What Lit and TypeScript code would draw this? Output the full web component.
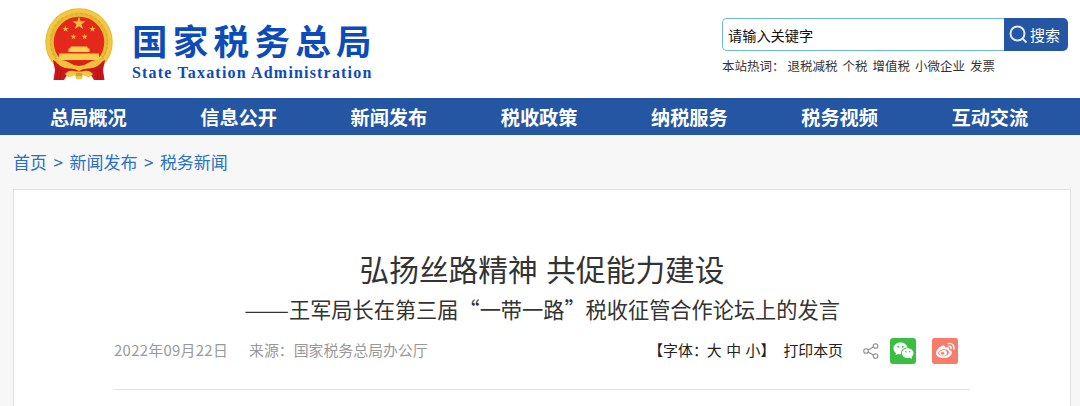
import { LitElement, html, css, svg } from 'lit';
import { customElement } from 'lit/decorators.js';

const NAV_ITEMS = ['总局概况', '信息公开', '新闻发布', '税收政策', '纳税服务', '税务视频', '互动交流'];
const HOT_WORDS = ['退税减税', '个税', '增值税', '小微企业', '发票'];
const CRUMBS = ['首页', '新闻发布', '税务新闻'];
const FONT_SIZES = ['大', '中', '小'];

const STAR = 'M0 -1 L.2245 -.309 L.951 -.309 L.363 .118 L.588 .809 L0 .382 L-.588 .809 L-.363 .118 L-.951 -.309 L-.2245 -.309 Z';

// cx, cy, radius
const STARS = [
  [34, 15.5, 7],
  [20.5, 21, 3.4],
  [47.5, 21, 3.4],
  [28.5, 28.7, 3.2],
  [39.7, 28.7, 3.2],
];

@customElement('tax-emblem')
export class TaxEmblem extends LitElement {
  static styles = css`
    :host {
      display: block;
    }

    svg {
      display: block;
    }
  `;

  render() {
    return html`
      <svg width="68" height="73" viewBox="0 0 68 73">
        <circle cx="34" cy="34" r="29.500" fill="#e4281c" stroke="#e9b935" stroke-width="8.500" />
        <circle cx="34" cy="34" r="31" fill="none" stroke="#f0c843" stroke-width="3.500" />
        <circle cx="34" cy="34" r="28.500" fill="none" stroke="#e0ad30" stroke-width="1.500" stroke-dasharray="3 2" />
        ${STARS.map(
          ([x, y, r]) => svg`<path d=${STAR} transform="translate(${x} ${y}) scale(${r})" fill="#f4bf36" />`
        )}
        <path d="M26 38.500 H42 L43 40.500 H44.500 V44 H23.500 V40.500 H25 Z" fill="#f8d450" />
        <path d="M14 45.500 H54 V49 H57 L54 52 H14 L11 49 H14 Z" fill="#f6d04c" />
        <path d="M13 53 H55 L50 66 H18 Z" fill="#d8201a" />
        <path d="M8 52 L18 57 L27 62 L22 67 L19 72 H8.500 L10 62 Z" fill="#cd161b" />
        <path d="M60 52 L50 57 L41 62 L46 67 L49 72 H59.500 L58 62 Z" fill="#cd161b" />
        <path d="M13 60 L12 72 M16 62 L15 72 M55 60 L56 72 M52 62 L53 72" fill="none" stroke="#a90f16" stroke-width=".8" />
        <path d="M9 51 Q18 51 24 54.500 Q29 58 34 58 Q39 58 44 54.500 Q50 51 59 51 Q54 60 44 60.500 Q38 60 34 63 Q30 60 24 60.500 Q14 60 9 51 Z" fill="#f0c23c" />
        <path d="M20 66 Q24 61 31 63.500 H37 Q44 61 48 66 L44 69.500 L38 67 L37 71 H31 L30 67 L24 69.500 Z" fill="#f3c642" />
        <path d="M31 65 H37 V68 H31 Z" fill="#dc9d27" />
      </svg>
    `;
  }
}

@customElement('site-header')
export class SiteHeader extends LitElement {
  static styles = css`
    :host {
      display: flex;
      justify-content: space-between;
      box-sizing: border-box;
      height: 98px;
      padding: 8px 12px 0 45px;
      background: #fff;
    }

    .brand {
      display: flex;
      gap: 19px;
    }

    .brand-text {
      padding-top: 8px;
      color: #0b4cb8;
      white-space: nowrap;
    }

    .brand-name {
      font-size: 35.500px;
      font-weight: 700;
      line-height: 48px;
      letter-spacing: 5.300px;
    }

    .brand-sub {
      font-family: 'Liberation Serif', serif;
      font-size: 16px;
      font-weight: 700;
      line-height: 18px;
      letter-spacing: 1.180px;
    }

    .search {
      width: 346px;
      padding-top: 10px;
    }

    .search-box {
      display: flex;
      height: 33px;
    }

    .field {
      flex: 1;
      box-sizing: border-box;
      padding-left: 5px;
      border: 1px solid #6db6ec;
      border-right: none;
      border-radius: 5px 0 0 5px;
      color: #111;
      font-size: 14.200px;
      line-height: 32px;
    }

    .submit {
      display: flex;
      align-items: center;
      gap: 2px;
      box-sizing: border-box;
      width: 64px;
      padding-left: 5px;
      border-radius: 0 5px 5px 0;
      background: #2456a3;
      color: #fff;
      font-size: 15px;
      white-space: nowrap;
    }

    .hot {
      display: flex;
      margin-top: 5px;
      color: #333;
      font-size: 12.500px;
      line-height: 20px;
      white-space: nowrap;
    }

    .hot-words {
      display: flex;
      gap: 5px;
      margin-left: 3px;
    }
  `;

  render() {
    return html`
      <div class="brand">
        <tax-emblem></tax-emblem>
        <div class="brand-text">
          <div class="brand-name">国家税务总局</div>
          <div class="brand-sub">State Taxation Administration</div>
        </div>
      </div>
      <div class="search">
        <div class="search-box">
          <div class="field">请输入关键字</div>
          <div class="submit">
            <svg width="19" height="19" viewBox="0 0 19 19" fill="none" stroke="#dfe9f8" stroke-width="2">
              <circle cx="8.500" cy="8.500" r="7" />
              <path d="M13.500 13.500 L17.500 17.500" />
            </svg>
            <span>搜索</span>
          </div>
        </div>
        <div class="hot">
          <span>本站热词：</span>
          <div class="hot-words">${HOT_WORDS.map((word) => html`<span>${word}</span>`)}</div>
        </div>
      </div>
    `;
  }
}

@customElement('share-icons')
export class ShareIcons extends LitElement {
  static styles = css`
    :host {
      display: flex;
      align-items: center;
    }

    .share {
      margin-right: 11px;
    }

    .wechat {
      margin-right: 16px;
    }
  `;

  render() {
    return html`
      <svg class="share" width="16" height="16" viewBox="0 0 16 16" fill="none" stroke="#8f8f8f" stroke-width="1.100">
        <circle cx="3" cy="8" r="2.300" />
        <circle cx="12.500" cy="3" r="2.300" />
        <circle cx="12.500" cy="13" r="2.300" />
        <path d="M5.100 6.900 L10.400 4.100 M5.100 9.100 L10.400 11.900" />
      </svg>
      <svg class="wechat" width="26" height="26" viewBox="0 0 26 26">
        <rect width="26" height="26" rx="3" fill="#3bbf42" />
        <path d="M10.500 4.500 C6.500 4.500 3.500 7.100 3.500 10.400 C3.500 12.300 4.500 13.900 6.100 15 L5.400 17.200 L8 15.900 C9.100 16.200 10 16.300 11.200 16.200 C10.500 12.500 13.600 9.400 17.500 9.500 C16.900 6.600 14 4.500 10.500 4.500 Z" fill="#fff" />
        <path d="M17.700 10.300 C14.500 10.300 12 12.500 12 15.200 C12 18 14.500 20.100 17.700 20.100 C18.500 20.100 19.200 20 19.900 19.800 L22 21 L21.500 19 C22.700 18.100 23.500 16.800 23.500 15.200 C23.500 12.500 20.900 10.300 17.700 10.300 Z" fill="#fff" />
        <g fill="#3bbf42">
          <circle cx="8.200" cy="8.700" r=".95" />
          <circle cx="12.800" cy="8.700" r=".95" />
          <circle cx="15.900" cy="13.700" r=".8" />
          <circle cx="19.600" cy="13.700" r=".8" />
        </g>
      </svg>
      <svg width="26" height="26" viewBox="0 0 26 26">
        <rect width="26" height="26" rx="2.500" fill="#f97b6b" />
        <path d="M10.800 7.600 C12.600 7 13.300 8.100 12.900 9.800 C15.800 8.800 17.800 9.400 17.100 11.700 C19 12.300 20 13.300 19.900 14.700 C19.700 17.600 16.200 20 11.800 20 C7.400 20 4 18.200 4 15.200 C4 12.300 7.500 8.700 10.800 7.600 Z" fill="#fff" />
        <ellipse cx="11.600" cy="14.800" rx="5.400" ry="3.500" fill="#f97b6b" transform="rotate(-8 11.600 14.800)" />
        <ellipse cx="11.200" cy="15" rx="3.900" ry="2.900" fill="#fff" transform="rotate(-12 11.200 15)" />
        <circle cx="10.600" cy="15.300" r="1.500" fill="#f97b6b" />
        <path d="M16.300 5.600 C20 4.700 22.700 7.600 21.700 11.200 M17 8.300 C18.500 8 19.500 9.100 19.100 10.600" fill="none" stroke="#fff" stroke-width="1.400" stroke-linecap="round" />
      </svg>
    `;
  }
}

@customElement('app-root')
export class AppRoot extends LitElement {
  static styles = css`
    :host {
      display: flex;
      flex-direction: column;
      height: 406px;
      overflow: hidden;
      background: #f7f7f7;
      font-family: 'Noto Sans CJK SC', sans-serif;
    }

    .nav {
      display: flex;
      gap: 73.500px;
      flex: none;
      height: 37px;
      padding-left: 50px;
      background: #2456a3;
      color: #fff;
      font-size: 19.200px;
      font-weight: 700;
      line-height: 38px;
      white-space: nowrap;
    }

    .crumbs {
      display: flex;
      gap: 6.500px;
      flex: none;
      height: 54px;
      padding-left: 13px;
      color: #2a71c0;
      font-size: 17px;
      line-height: 54px;
      white-space: nowrap;
    }

    .article {
      flex: 1;
      margin: 0 9px 0 13px;
      padding: 58px 100px 0 100px;
      border: 1px solid #e2e2e2;
      border-bottom: none;
      background: #fff;
      white-space: nowrap;
    }

    .title {
      margin: 0;
      color: #333;
      font-size: 29.700px;
      font-weight: 400;
      line-height: 41px;
      text-align: center;
      word-spacing: 2px;
    }

    .subtitle {
      display: flex;
      justify-content: center;
      height: 38px;
      margin: 0;
      color: #333;
      font-size: 21.200px;
      font-weight: 400;
      line-height: 39px;
    }

    .dash {
      font-size: 27px;
      font-weight: 300;
    }

    .meta {
      display: flex;
      align-items: center;
      height: 63px;
      box-sizing: border-box;
      padding: 0 12px 14px 0;
      border-bottom: 1px solid #e2e2e2;
      color: #999;
      font-size: 14.900px;
    }

    .date,
    .source,
    .font-picker {
      padding-bottom: 4px;
    }

    .date {
      width: 135px;
      letter-spacing: 0.300px;
    }

    .tools {
      display: flex;
      align-items: center;
      margin-left: auto;
      color: #222;
    }

    .font-picker {
      display: flex;
      margin-right: 20px;
    }

    .sizes {
      display: flex;
      gap: 4.500px;
      margin-left: -1px;
    }

    .bracket {
      margin-right: -4px;
    }

    .print {
      margin-left: 12px;
    }
  `;

  render() {
    return html`
      <site-header></site-header>
      <nav class="nav">${NAV_ITEMS.map((item) => html`<span>${item}</span>`)}</nav>
      <div class="crumbs">
        ${CRUMBS.map((crumb, i) => html`${i > 0 ? html`<span>&gt;</span>` : ''}<span>${crumb}</span>`)}
      </div>
      <main class="article">
        <h1 class="title">弘扬丝路精神 共促能力建设</h1>
        <h2 class="subtitle">
          <span class="dash">——</span>
          <span>王军局长在第三届“一带一路”税收征管合作论坛上的发言</span>
        </h2>
        <div class="meta">
          <span class="date">2022年09月22日</span>
          <span class="source">来源：国家税务总局办公厅</span>
          <div class="tools">
            <div class="font-picker">
              <span>【字体：</span>
              <div class="sizes">${FONT_SIZES.map((size) => html`<span>${size}</span>`)}</div>
              <span class="bracket">】</span>
              <span class="print">打印本页</span>
            </div>
            <share-icons></share-icons>
          </div>
        </div>
      </main>
    `;
  }
}

declare global {
  interface HTMLElementTagNameMap {
    'app-root': AppRoot;
    'site-header': SiteHeader;
    'share-icons': ShareIcons;
    'tax-emblem': TaxEmblem;
  }
}
